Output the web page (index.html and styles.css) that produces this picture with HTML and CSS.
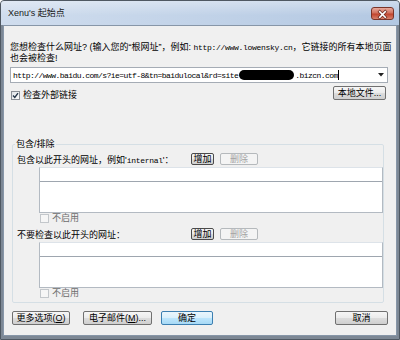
FILE: index.html
```html
<!DOCTYPE html>
<html lang="zh-CN">
<head>
  <meta charset="UTF-8">
  <meta name="viewport" content="width=device-width, initial-scale=1.0">
  <title>Xenu's 起始点</title>
  <link rel="stylesheet" href="styles.css">
</head>
<body>
  <div class="window">
    <div class="titlebar">
      <span class="title">Xenu's 起始点</span>
      <button class="close" title="关闭">
        <svg width="23" height="13" viewBox="0 0 23 13">
          <path d="M8.5 3.5 L14.5 9.5 M14.5 3.5 L8.5 9.5" stroke="#6b2a20" stroke-width="3.4" stroke-linecap="square"/>
          <path d="M8.5 3.5 L14.5 9.5 M14.5 3.5 L8.5 9.5" stroke="#fff" stroke-width="1.8" stroke-linecap="square"/>
        </svg>
      </button>
    </div>

    <div class="client">
      <p class="prompt">您想检查什么网址? (输入您的“根网址”，例如: <span class="mono">http://www.lowensky.cn</span>，它链接的所有本地页面<br>也会被检查!</p>

      <div class="combo">
        <span class="combo-text">http://www.baidu.com/s?ie=utf-8&amp;tn=baidulocal&amp;rd=site<span class="redact"></span>.bizcn.com</span><span class="caret"></span>
        <svg class="arrow" width="6" height="4" viewBox="0 0 6 4"><path d="M0 0 H6 L3 3.5 Z" fill="#222"/></svg>
      </div>

      <div class="row">
        <label class="check">
          <span class="box">
            <svg width="7" height="7" viewBox="0 0 7 7"><path d="M1 3.6 L2.8 5.4 L6 1.2" fill="none" stroke="#243447" stroke-width="1.4"/></svg>
          </span>
          检查外部链接
        </label>
        <button class="btn local">本地文件...</button>
      </div>

      <fieldset class="group">
        <legend>包含/排除</legend>

        <div class="field-row">
          <span class="field-label">包含以此开头的网址，例如'<span class="mono">internal</span>'：</span>
          <button class="btn small add">增加</button>
          <button class="btn small remove" disabled>删除</button>
        </div>
        <div class="listbox"><div class="list-edit"></div></div>
        <label class="check off"><span class="box"></span>不启用</label>

        <div class="field-row second">
          <span class="field-label">不要检查以此开头的网址：</span>
          <button class="btn small add">增加</button>
          <button class="btn small remove" disabled>删除</button>
        </div>
        <div class="listbox"><div class="list-edit"></div></div>
        <label class="check off"><span class="box"></span>不启用</label>
      </fieldset>

      <div class="footer">
        <button class="btn more">更多选项(<u>O</u>)</button>
        <button class="btn mail">电子邮件(<u>M</u>)...</button>
        <button class="btn ok">确定</button>
        <button class="btn cancel">取消</button>
      </div>
    </div>
  </div>
</body>
</html>
```

FILE: styles.css
```css
* {
  box-sizing: border-box;
}
body {
  margin: 0;
  background: #fff;
  font-family: "Liberation Sans", "Noto Sans CJK SC", sans-serif;
  font-size: 9px;
  color: #000;
}
.window {
  width: 400px;
  height: 340px;
  display: flex;
  flex-direction: column;
  border: 1px solid #4f5862;
  border-radius: 4px 4px 0 0;
  background: #7d8895;
}
.titlebar {
  height: 24px;
  display: flex;
  align-items: center;
  padding: 0 5px 0 7px;
  border-radius: 3px 3px 0 0;
  background:
    linear-gradient(rgba(255,255,255,0.35), rgba(255,255,255,0) 60%),
    linear-gradient(to right, #d0ddee, #b3c8e2);
}
.title {
  color: #1a1a1a;
  line-height: 11px;
}
.close {
  margin-left: auto;
  width: 23px;
  height: 13px;
  padding: 0;
  border: 1px solid #7a3428;
  border-radius: 3px;
  background: linear-gradient(#e8a99c, #d1705c 45%, #c1442d 55%, #d8826c);
  display: flex;
}
.client {
  flex: 1;
  margin: 0 2px 3px;
  border: 1px solid #8796a8;
  background: #f0f0f0;
  padding: 0 8px 0 6px;
}
.mono {
  font-family: "Liberation Mono", monospace;
  font-size: 8px;
  letter-spacing: -0.3px;
}
.prompt {
  margin: 16px 0 0;
  line-height: 11px;
  white-space: nowrap;
}
.combo {
  margin-top: 3px;
  height: 16px;
  display: flex;
  align-items: center;
  padding: 0 3px 0 2px;
  border: 1px solid #a5acb5;
  background: #fff;
}
.combo-text {
  font-family: "Liberation Mono", monospace;
  font-size: 8px;
  letter-spacing: -0.55px;
  white-space: nowrap;
}
.redact {
  display: inline-block;
  width: 55px;
  height: 10px;
  margin: 0 1px 0 1px;
  vertical-align: -2px;
  background: #000;
  border-radius: 5px;
}
.caret {
  width: 1px;
  height: 10px;
  background: #000;
}
.arrow {
  margin-left: auto;
}
.row {
  margin-top: 3px;
  height: 14px;
  display: flex;
  justify-content: space-between;
  align-items: flex-end;
}
.check {
  display: flex;
  align-items: center;
  gap: 3px;
  height: 9px;
  line-height: 9px;
  margin-left: 1px;
}
.box {
  width: 9px;
  height: 9px;
  display: flex;
  align-items: center;
  justify-content: center;
  border: 1px solid #8a8f96;
  background: linear-gradient(135deg, #dfe3e8, #fdfdfd);
}
.check.off {
  margin: 1px 0 0 23px;
  color: #6d6d6d;
}
.check.off .box {
  border-color: #c3c7cb;
  background: #f6f6f6;
}
.btn {
  height: 14px;
  padding: 0;
  font-family: inherit;
  font-size: 9px;
  line-height: 12px;
  color: #000;
  border: 1px solid #707070;
  border-radius: 2px;
  background: linear-gradient(#f6f6f6, #ebebeb 50%, #dddddd 50%, #cfcfcf);
}
.btn.local {
  width: 53px;
  margin-right: 2px;
}
.btn.small {
  height: 12px;
  line-height: 10px;
}
.btn.add {
  width: 23px;
  border-color: #4a4a4a;
}
.btn.remove {
  width: 38px;
  color: #a3a3a3;
  border-color: #b5b9bc;
  background: #f4f4f4;
}
.group {
  margin: 39px 4px 0 2px;
  padding: 3px 0 4px 4px;
  min-width: 0;
  border: 1px solid #d5dfe5;
  border-radius: 2px;
}
.group legend {
  margin-left: -2px;
  padding: 0 1px;
  line-height: 11px;
}
.field-row {
  height: 12px;
  display: flex;
  align-items: center;
  gap: 6px;
}
.field-row.second {
  margin-top: 5px;
}
.field-label {
  width: 168px;
  white-space: nowrap;
}
.listbox {
  margin: 2px 0 0 22px;
  height: 46px;
  border: 1px solid #b3bac2;
  border-top-color: #dde3e9;
  background: #fff;
}
.list-edit {
  height: 14px;
  border-bottom: 1px solid #9ea6af;
}
.footer {
  margin-top: 8px;
  display: flex;
  padding-left: 2px;
}
.btn.more {
  width: 58px;
}
.btn.mail {
  width: 69px;
  margin-left: 13px;
}
.btn.ok {
  width: 52px;
  margin-left: 9px;
  border-color: #3c7fb1;
  background: linear-gradient(#eaf6fd, #d9f0fc 50%, #bee6fd 50%, #a7d9f5);
}
.btn.cancel {
  width: 53px;
  margin-left: auto;
}
```
